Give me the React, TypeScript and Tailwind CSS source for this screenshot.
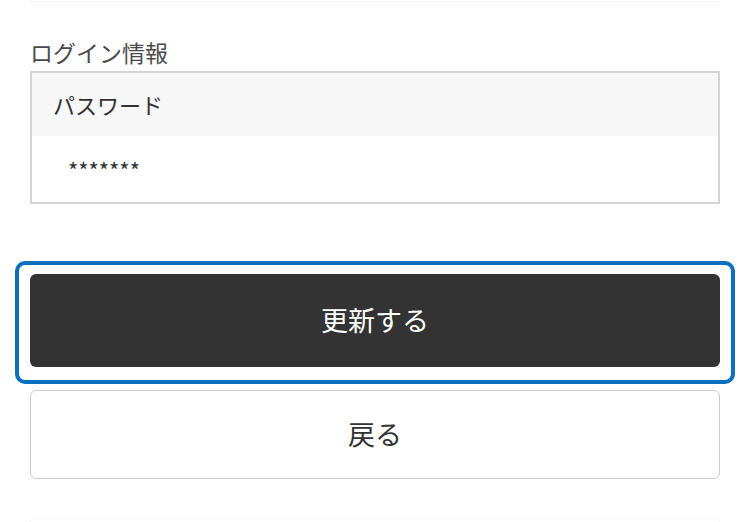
export default function App() {
  return (
    <div
      className="w-[750px] h-[522px] overflow-hidden bg-white text-[#333]"
      style={{ fontFamily: '"Noto Sans CJK JP", "Noto Sans", sans-serif' }}
    >
      {/* 上のカードの下端 */}
      <div className="mx-[30px] h-[2px] rounded-b-[4px] border-x border-b border-[#f4f4f4]" />

      <div className="px-[30px]">
        {/* ログイン情報 */}
        <div className="mt-[35px] mb-[4px] text-[23px] leading-[30px] text-[#4a4a4a]">ログイン情報</div>
        <div className="border-2 border-[#d4d4d4]">
          <div className="h-[63px] bg-[#f7f7f7] pl-[21px] flex items-center text-[22px]">パスワード</div>
          <div className="h-[66px] pl-[36px] flex items-center text-[22px] pt-[1px]">*******</div>
        </div>

        {/* ボタン */}
        <div className="-mx-[15px] mt-[57px] rounded-[10px] border-4 border-[#0a70bf] px-[11px] pt-[9px] pb-[13px]">
          <button className="w-full h-[93px] rounded-[6px] bg-[#333333] text-white text-[27px] flex items-center justify-center">
            更新する
          </button>
        </div>
        <button className="mt-[6px] w-full h-[89px] rounded-[6px] border border-[#cccccc] bg-white text-[27px] flex items-center justify-center">
          戻る
        </button>

        {/* 下のカードの上端 */}
        <div className="mt-[39px] h-[10px] rounded-t-[4px] border-x border-t border-[#f6f6f6]" />
      </div>
    </div>
  );
}
